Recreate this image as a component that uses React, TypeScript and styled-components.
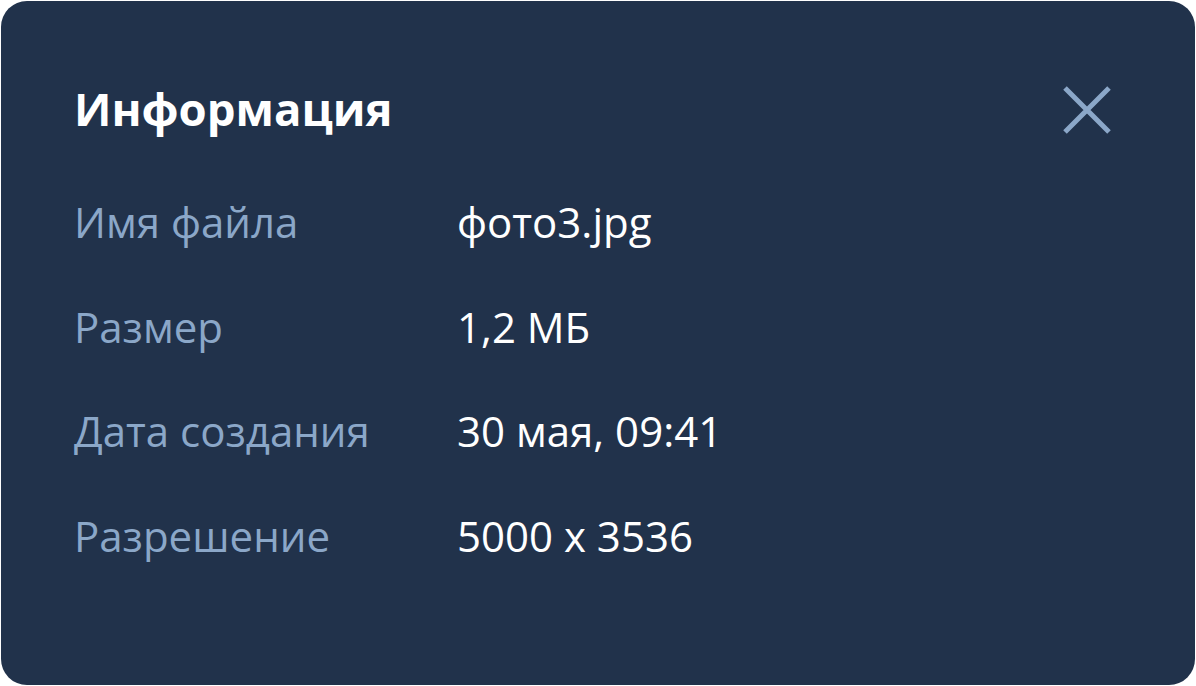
import React from "react";
import styled, { createGlobalStyle } from "styled-components";

const GlobalStyle = createGlobalStyle`
   html, body {
      margin: 0;
      padding: 0;
      background: #ffffff;
   }
   body {
      font-family: "Open Sans", "Noto Sans", sans-serif;
   }
`;

const rows = [
   { label: "Имя файла", value: "фото3.jpg" },
   { label: "Размер", value: "1,2 МБ" },
   { label: "Дата создания", value: "30 мая, 09:41" },
   { label: "Разрешение", value: "5000 x 3536" },
];

const App = () => {
   return (
      <>
         <GlobalStyle />
         <Card>
            <Header>
               <Title>Информация</Title>
               <CloseButton aria-label="Закрыть">
                  <svg width="52" height="52" viewBox="0 0 52 52">
                     <path
                        d="M4 4 L48 48 M48 4 L4 48"
                        stroke="#8ba7c8"
                        strokeWidth="5"
                        fill="none"
                     />
                  </svg>
               </CloseButton>
            </Header>

            <InfoList>
               {rows.map((row, key) => (
                  <Row key={key}>
                     <Label>{row.label}</Label>
                     <Value>{row.value}</Value>
                  </Row>
               ))}
            </InfoList>
         </Card>
      </>
   );
};

const Card = styled.div`
   box-sizing: border-box;
   margin: 1px;
   height: 684px;
   padding: 78px 82px 0 73px;
   background: #21324b;
   border-radius: 26px;
`;

const Header = styled.div`
   display: flex;
   align-items: center;
   justify-content: space-between;
   height: 58px;
`;

const Title = styled.h1`
   margin: 0;
   font-size: 45.5px;
   font-weight: 700;
   color: #ffffff;
`;

const CloseButton = styled.button`
   display: flex;
   margin-top: 4px;
   padding: 0;
   border: none;
   background: none;
   cursor: pointer;
`;

const InfoList = styled.div`
   display: flex;
   flex-direction: column;
   gap: 47.5px;
   margin-top: 56px;
`;

const Row = styled.div`
   display: grid;
   grid-template-columns: 383px 1fr;
   align-items: baseline;
   font-size: 42px;
   line-height: 57px;
`;

const Label = styled.span`
   color: #8ba7c8;
`;

const Value = styled.span`
   color: #ffffff;
`;

export default App;
